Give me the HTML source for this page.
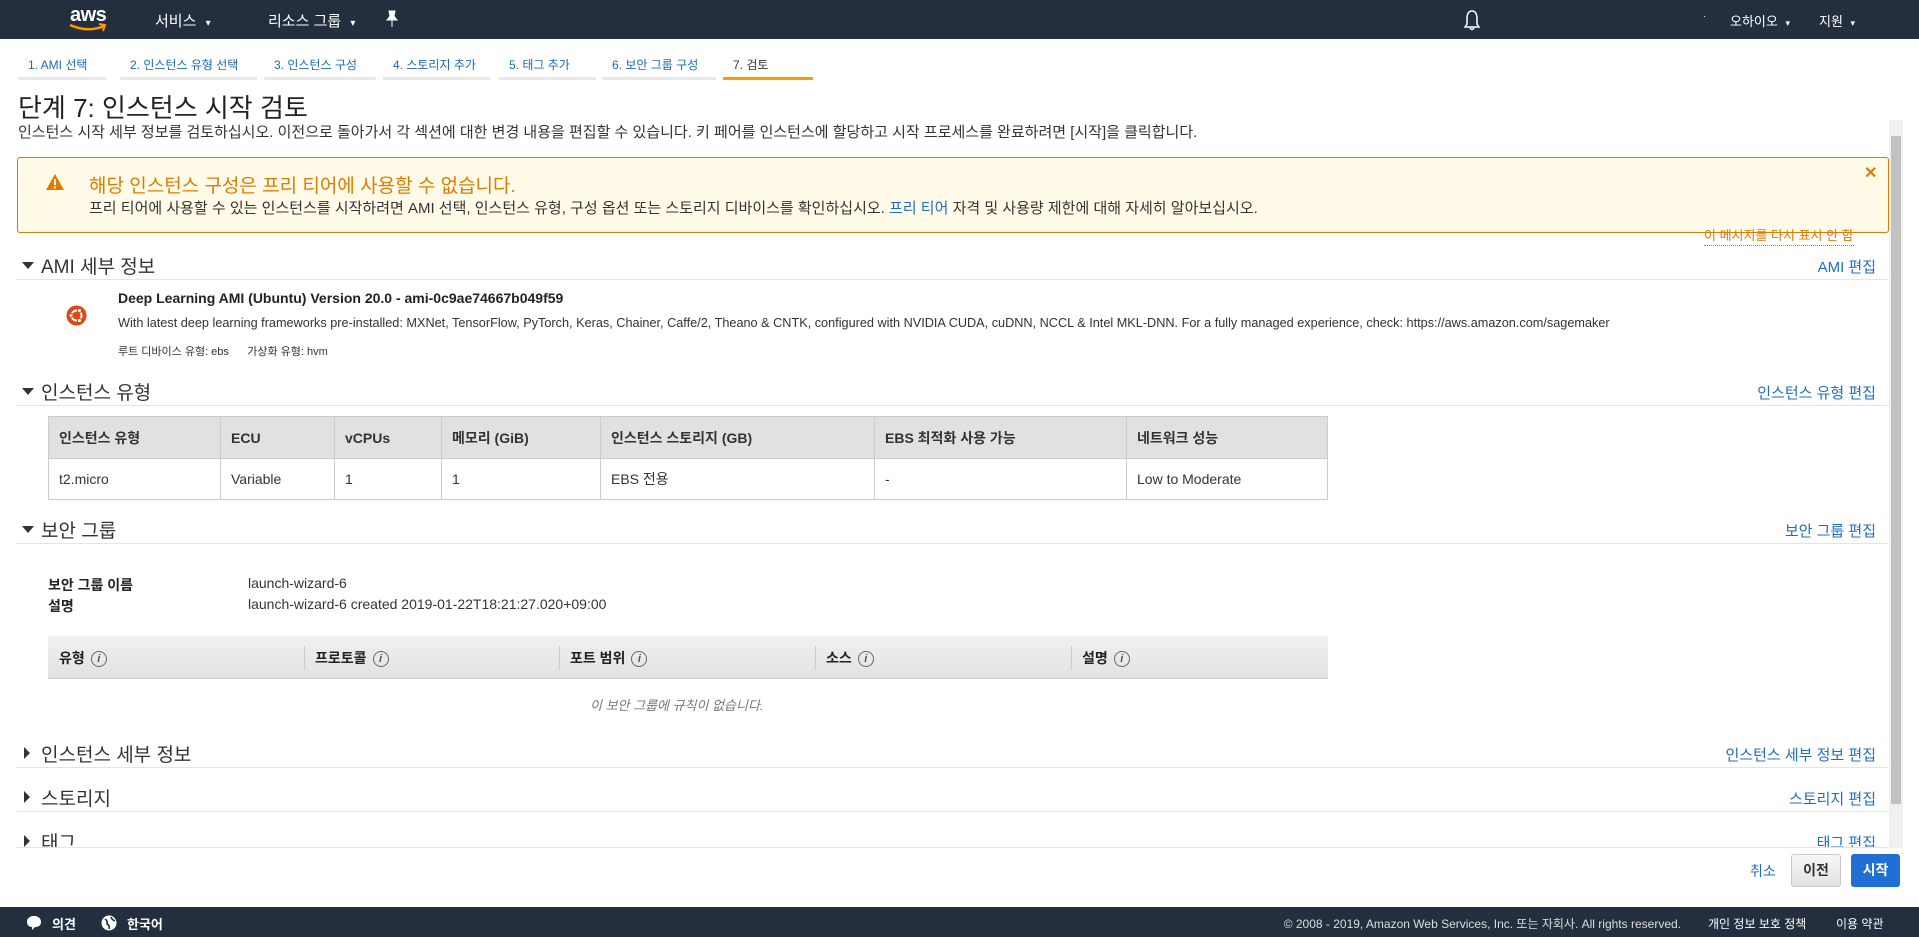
<!DOCTYPE html>
<html><head><meta charset="utf-8">
<style>
*{box-sizing:border-box;margin:0;padding:0}
body{width:1919px;height:937px;overflow:hidden;background:#fff;font-family:"Liberation Sans","Noto Sans CJK KR",sans-serif;color:#333;font-size:14px;position:relative}
.a{position:absolute;white-space:nowrap}
.hdr{position:absolute;left:0;top:0;width:1919px;height:39px;background:#232f3e;color:#fff}
.ftr{position:absolute;left:0;top:907px;width:1919px;height:30px;background:#232f3e;color:#fff;font-size:13px}
.tab{position:absolute;top:56px;height:24px;font-size:12px;color:#1a6bb5;border-bottom:3px solid #e9e9e9;padding-left:10px}
.tab.on{color:#333;border-bottom-color:#f90}
.blue{color:#1f6dc2}
.sec{position:absolute;left:17px;width:1872px;border-bottom:1px solid #e4e4e4;height:28px;font-size:19px;color:#333}
.sec .t{position:absolute;left:24px;top:0}
.sec .e{position:absolute;right:13px;top:4px;font-size:15px;color:#1f6dc2}
.tri{position:absolute;left:5px;top:10px;width:0;height:0;border-left:6px solid transparent;border-right:6px solid transparent;border-top:7px solid #333}
.trir{position:absolute;left:7px;top:7px;width:0;height:0;border-top:6px solid transparent;border-bottom:6px solid transparent;border-left:6px solid #333}
table{border-collapse:collapse;position:absolute}
td,th{border:1px solid #ccc;text-align:left;padding-left:10px;font-size:14px;font-weight:normal}
th{background:#e1e1e1;font-weight:bold;height:42px}
td{height:41px}
.info{display:inline-block;width:16px;height:16px;border:1px solid #666;border-radius:50%;font-size:11px;text-align:center;line-height:14px;font-style:italic;margin-left:6px;color:#555;vertical-align:middle}
</style></head><body>
<div class="hdr">
 <div class="a" style="left:70px;top:4px;font-size:20px;font-weight:bold;letter-spacing:-0.5px">aws</div>
 <svg class="a" style="left:68px;top:23px" width="40" height="10"><path d="M2 2 Q20 10 36 3" stroke="#f90" stroke-width="2.5" fill="none"/><path d="M31 1 L37 2 L35 8" stroke="#f90" stroke-width="2" fill="none"/></svg>
 <div class="a" style="left:155px;top:10px;font-size:15px">서비스 <span style="font-size:10px;margin-left:5px">▾</span></div>
 <div class="a" style="left:268px;top:10px;font-size:15px">리소스 그룹 <span style="font-size:10px;margin-left:5px">▾</span></div>
 <svg class="a" style="left:385px;top:10px" width="14" height="18"><path d="M4 1 L10 1 L9 6 L12 10 L2 10 L5 6Z M7 10 L7 17" fill="#fff" stroke="#fff" stroke-width="1"/></svg>
 <svg class="a" style="left:1463px;top:9px" width="18" height="22"><path d="M9 2 C5 2 4 6 4 10 L4 15 L2 18 L16 18 L14 15 L14 10 C14 6 13 2 9 2Z M7 19 Q9 22 11 19" stroke="#fff" stroke-width="1.5" fill="none"/></svg>
 <div class="a" style="left:1703px;top:11px;font-size:10px">·</div>
 <div class="a" style="left:1730px;top:11px;font-size:13px">오하이오 <span style="font-size:9px;margin-left:4px">▾</span></div>
 <div class="a" style="left:1819px;top:11px;font-size:13px">지원 <span style="font-size:9px;margin-left:4px">▾</span></div>
</div>

<div class="tab" style="left:18px;width:88px">1. AMI 선택</div>
<div class="tab" style="left:120px;width:137px">2. 인스턴스 유형 선택</div>
<div class="tab" style="left:264px;width:112px">3. 인스턴스 구성</div>
<div class="tab" style="left:383px;width:107px">4. 스토리지 추가</div>
<div class="tab" style="left:499px;width:97px">5. 태그 추가</div>
<div class="tab" style="left:602px;width:114px">6. 보안 그룹 구성</div>
<div class="tab on" style="left:723px;width:90px">7. 검토</div>

<div class="a" style="left:18px;top:88px;font-size:26px;color:#222">단계 7: 인스턴스 시작 검토</div>
<div class="a" style="left:18px;top:121px;font-size:15px">인스턴스 시작 세부 정보를 검토하십시오. 이전으로 돌아가서 각 섹션에 대한 변경 내용을 편집할 수 있습니다. 키 페어를 인스턴스에 할당하고 시작 프로세스를 완료하려면 [시작]을 클릭합니다.</div>

<div class="a" style="left:1889px;top:120px;width:14px;height:728px;background:#f0f0f0"></div>
<div class="a" style="left:1891px;top:136px;width:10px;height:668px;background:#c1c1c1"></div>

<div class="a" style="left:17px;top:157px;width:1872px;height:76px;background:#fffbe8;border:1px solid #e07b00;border-radius:3px"></div>
<svg class="a" style="left:45px;top:173px" width="20" height="18"><path d="M10 1 L19 17 L1 17Z" fill="#e07b00"/><rect x="9" y="6" width="2" height="6" fill="#fff"/><rect x="9" y="13.5" width="2" height="2" fill="#fff"/></svg>
<div class="a" style="left:89px;top:171px;font-size:19px;color:#e07b00">해당 인스턴스 구성은 프리 티어에 사용할 수 없습니다.</div>
<div class="a" style="left:89px;top:197px;font-size:15px">프리 티어에 사용할 수 있는 인스턴스를 시작하려면 AMI 선택, 인스턴스 유형, 구성 옵션 또는 스토리지 디바이스를 확인하십시오. <span class="blue">프리 티어</span> 자격 및 사용량 제한에 대해 자세히 알아보십시오.</div>
<div class="a" style="left:1864px;top:163px;font-size:16px;font-weight:bold;color:#e07b00">✕</div>
<div class="a" style="left:1704px;top:228px;font-size:13px;color:#e07b00;border-bottom:1px dotted #e07b00;height:18px;line-height:16px">이 메시지를 다시 표시 안 함</div>

<div class="sec" style="top:252px"><div class="tri"></div><div class="t">AMI 세부 정보</div><div class="e">AMI 편집</div></div>
<svg class="a" style="left:66px;top:305px" width="21" height="21"><circle cx="10.5" cy="10.5" r="10" fill="#dd4814"/><circle cx="10.5" cy="10.5" r="5" stroke="#fff" stroke-width="2" fill="none"/><circle cx="5" cy="10.5" r="2" fill="#fff" stroke="#dd4814"/><circle cx="13.5" cy="5.5" r="2" fill="#fff" stroke="#dd4814"/><circle cx="13.5" cy="15.5" r="2" fill="#fff" stroke="#dd4814"/></svg>
<div class="a" style="left:118px;top:290px;font-size:14px;font-weight:bold;color:#222">Deep Learning AMI (Ubuntu) Version 20.0 - ami-0c9ae74667b049f59</div>
<div class="a" style="left:118px;top:316px;font-size:12.7px">With latest deep learning frameworks pre-installed: MXNet, TensorFlow, PyTorch, Keras, Chainer, Caffe/2, Theano &amp; CNTK, configured with NVIDIA CUDA, cuDNN, NCCL &amp; Intel MKL-DNN. For a fully managed experience, check: https://aws.amazon.com/sagemaker</div>
<div class="a" style="left:118px;top:343px;font-size:11px">루트 디바이스 유형: ebs &nbsp;&nbsp;&nbsp;&nbsp; 가상화 유형: hvm</div>

<div class="sec" style="top:378px"><div class="tri"></div><div class="t">인스턴스 유형</div><div class="e">인스턴스 유형 편집</div></div>
<table style="left:48px;top:416px;width:1280px">
<tr><th style="width:172px">인스턴스 유형</th><th style="width:114px">ECU</th><th style="width:107px">vCPUs</th><th style="width:159px">메모리 (GiB)</th><th style="width:274px">인스턴스 스토리지 (GB)</th><th style="width:252px">EBS 최적화 사용 가능</th><th>네트워크 성능</th></tr>
<tr><td>t2.micro</td><td>Variable</td><td>1</td><td>1</td><td>EBS 전용</td><td>-</td><td>Low to Moderate</td></tr>
</table>

<div class="sec" style="top:516px"><div class="tri"></div><div class="t">보안 그룹</div><div class="e">보안 그룹 편집</div></div>
<div class="a" style="left:48px;top:575px;font-size:14px;font-weight:bold;color:#222">보안 그룹 이름</div>
<div class="a" style="left:248px;top:575px;font-size:14px">launch-wizard-6</div>
<div class="a" style="left:48px;top:596px;font-size:14px;font-weight:bold;color:#222">설명</div>
<div class="a" style="left:248px;top:596px;font-size:14px">launch-wizard-6 created 2019-01-22T18:21:27.020+09:00</div>

<div class="a" style="left:48px;top:636px;width:1280px;height:43px;background:linear-gradient(#f0f0f0,#e2e2e2);border-bottom:1px solid #ccc"></div>
<div class="a" style="left:304px;top:646px;height:24px;border-left:1px solid #ccc"></div>
<div class="a" style="left:559px;top:646px;height:24px;border-left:1px solid #ccc"></div>
<div class="a" style="left:815px;top:646px;height:24px;border-left:1px solid #ccc"></div>
<div class="a" style="left:1071px;top:646px;height:24px;border-left:1px solid #ccc"></div>
<div class="a" style="left:59px;top:648px;font-weight:bold;color:#222">유형<span class="info">i</span></div>
<div class="a" style="left:315px;top:648px;font-weight:bold;color:#222">프로토콜<span class="info">i</span></div>
<div class="a" style="left:570px;top:648px;font-weight:bold;color:#222">포트 범위<span class="info">i</span></div>
<div class="a" style="left:826px;top:648px;font-weight:bold;color:#222">소스<span class="info">i</span></div>
<div class="a" style="left:1082px;top:648px;font-weight:bold;color:#222">설명<span class="info">i</span></div>
<div class="a" style="left:590px;top:695px;font-size:13px;font-style:italic;color:#777">이 보안 그룹에 규칙이 없습니다.</div>

<div class="sec" style="top:740px"><div class="trir"></div><div class="t">인스턴스 세부 정보</div><div class="e">인스턴스 세부 정보 편집</div></div>
<div class="sec" style="top:784px"><div class="trir"></div><div class="t">스토리지</div><div class="e">스토리지 편집</div></div>
<div class="a" style="left:17px;top:828px;width:1872px;height:20px;overflow:hidden;border-bottom:1px solid #e4e4e4">
 <div class="trir" style="top:7px"></div><div class="a" style="left:24px;top:0;font-size:19px">태그</div><div class="a" style="right:13px;top:4px;font-size:15px;color:#1f6dc2">태그 편집</div>
</div>

<div class="a" style="left:1750px;top:861px;font-size:14px;color:#1f6dc2">취소</div>
<div class="a" style="left:1791px;top:854px;width:50px;height:33px;background:linear-gradient(#f6f6f6,#e3e3e3);border:1px solid #c8c8c8;border-radius:3px;text-align:center;line-height:31px;font-weight:bold;font-size:14px;color:#333">이전</div>
<div class="a" style="left:1851px;top:854px;width:49px;height:33px;background:#1f70d2;border-radius:3px;text-align:center;line-height:33px;font-weight:bold;font-size:14px;color:#fff">시작</div>

<div class="ftr">
 <svg class="a" style="left:26px;top:8px" width="16" height="16"><path d="M8 1 C3 1 1 4 1 7 C1 10 3 12 6 12 L6 15 L9 12 C13 12 15 10 15 7 C15 4 13 1 8 1Z" fill="#fff"/></svg>
 <div class="a" style="left:52px;top:7px;font-weight:bold">의견</div>
 <svg class="a" style="left:101px;top:8px" width="16" height="16"><circle cx="8" cy="8" r="7.5" fill="#fff"/><path d="M4 4 Q7 6 6 9 Q9 10 8 14 M10 2 Q11 5 14 6" stroke="#232f3e" stroke-width="1.6" fill="none"/></svg>
 <div class="a" style="left:127px;top:7px;font-weight:bold">한국어</div>
 <div class="a" style="right:238px;top:8px;font-size:12px;color:#ddd">© 2008 - 2019, Amazon Web Services, Inc. 또는 자회사. All rights reserved.</div>
 <div class="a" style="left:1708px;top:8px;font-size:12px">개인 정보 보호 정책</div>
 <div class="a" style="left:1836px;top:8px;font-size:12px">이용 약관</div>
</div>
</body></html>
